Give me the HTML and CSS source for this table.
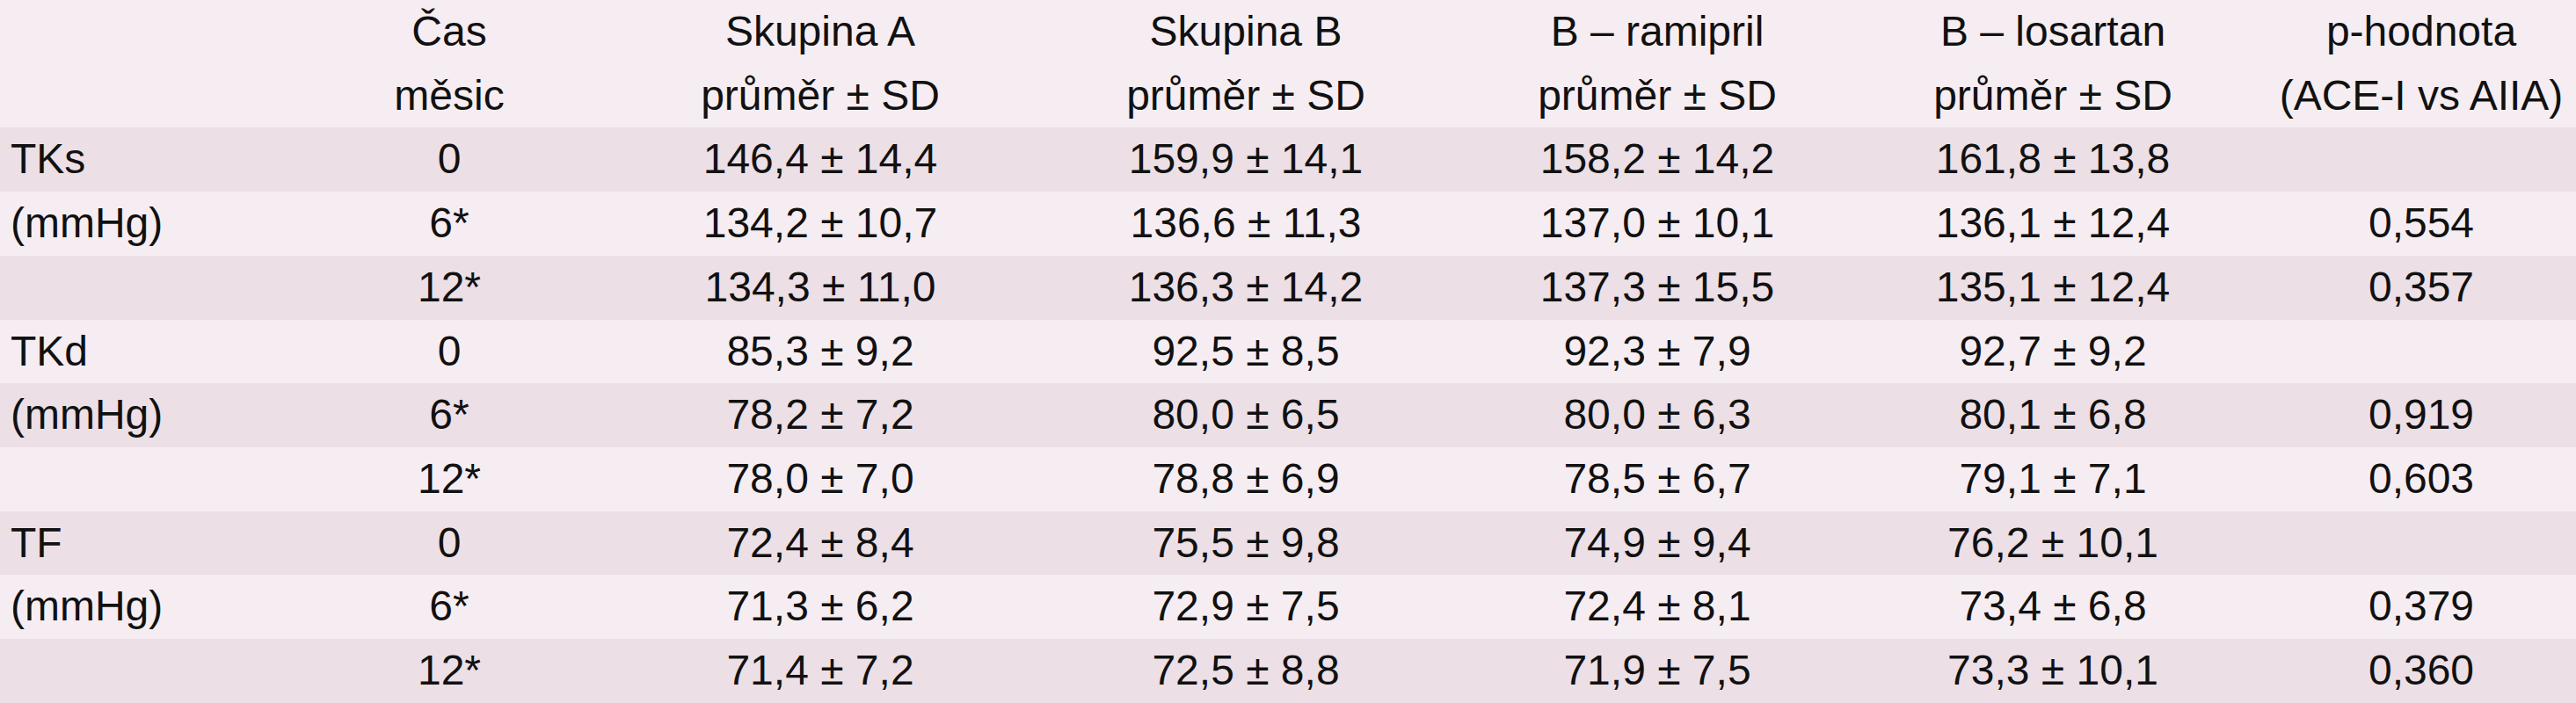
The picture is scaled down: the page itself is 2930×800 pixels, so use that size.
FILE: index.html
```html
<!DOCTYPE html>
<html lang="cs">
<head>
<meta charset="utf-8">
<title>Tabulka</title>
<link rel="stylesheet" href="styles.css">
</head>
<body>
<table class="data">
  <colgroup>
    <col class="c0"><col class="c1"><col class="c2"><col class="c3"><col class="c4"><col class="c5"><col class="c6">
  </colgroup>
  <thead>
    <tr>
      <th class="label"></th>
      <th>Čas<br>měsic</th>
      <th>Skupina A<br>průměr ± SD</th>
      <th>Skupina B<br>průměr ± SD</th>
      <th>B – ramipril<br>průměr ± SD</th>
      <th>B – losartan<br>průměr ± SD</th>
      <th>p-hodnota<br>(ACE-I vs AIIA)</th>
    </tr>
  </thead>
  <tbody>
    <tr><td class="label">TKs</td><td>0</td><td>146,4 ± 14,4</td><td>159,9 ± 14,1</td><td>158,2 ± 14,2</td><td>161,8 ± 13,8</td><td></td></tr>
    <tr><td class="label">(mmHg)</td><td>6*</td><td>134,2 ± 10,7</td><td>136,6 ± 11,3</td><td>137,0 ± 10,1</td><td>136,1 ± 12,4</td><td>0,554</td></tr>
    <tr><td class="label"></td><td>12*</td><td>134,3 ± 11,0</td><td>136,3 ± 14,2</td><td>137,3 ± 15,5</td><td>135,1 ± 12,4</td><td>0,357</td></tr>
    <tr><td class="label">TKd</td><td>0</td><td>85,3 ± 9,2</td><td>92,5 ± 8,5</td><td>92,3 ± 7,9</td><td>92,7 ± 9,2</td><td></td></tr>
    <tr><td class="label">(mmHg)</td><td>6*</td><td>78,2 ± 7,2</td><td>80,0 ± 6,5</td><td>80,0 ± 6,3</td><td>80,1 ± 6,8</td><td>0,919</td></tr>
    <tr><td class="label"></td><td>12*</td><td>78,0 ± 7,0</td><td>78,8 ± 6,9</td><td>78,5 ± 6,7</td><td>79,1 ± 7,1</td><td>0,603</td></tr>
    <tr><td class="label">TF</td><td>0</td><td>72,4 ± 8,4</td><td>75,5 ± 9,8</td><td>74,9 ± 9,4</td><td>76,2 ± 10,1</td><td></td></tr>
    <tr><td class="label">(mmHg)</td><td>6*</td><td>71,3 ± 6,2</td><td>72,9 ± 7,5</td><td>72,4 ± 8,1</td><td>73,4 ± 6,8</td><td>0,379</td></tr>
    <tr><td class="label"></td><td>12*</td><td>71,4 ± 7,2</td><td>72,5 ± 8,8</td><td>71,9 ± 7,5</td><td>73,3 ± 10,1</td><td>0,360</td></tr>
  </tbody>
</table>
</body>
</html>
```
FILE: styles.css
```css
html, body {
  margin: 0;
  padding: 0;
  background: #f6edf2;
}

.data {
  width: 2930px;
  border-collapse: collapse;
  table-layout: fixed;
  font-family: "Liberation Sans", Arial, sans-serif;
  font-size: 48px;
  color: #111111;
}

.c0 { width: 312px; }
.c1 { width: 398px; }
.c2 { width: 446px; }
.c3 { width: 522px; }
.c4 { width: 414px; }
.c5 { width: 486px; }
.c6 { width: 352px; }

.data th,
.data td {
  padding: 0;
  text-align: center;
  font-weight: normal;
  line-height: 72.7px;
  height: 72.7px;
  white-space: nowrap;
  vertical-align: middle;
}

.data thead tr {
  background: #f6edf2;
}

.data .label {
  text-align: left;
  padding-left: 12px;
}

.data tbody tr:nth-child(odd) {
  background: #ecdfe6;
}

.data tbody tr:nth-child(even) {
  background: #f6edf2;
}
```
